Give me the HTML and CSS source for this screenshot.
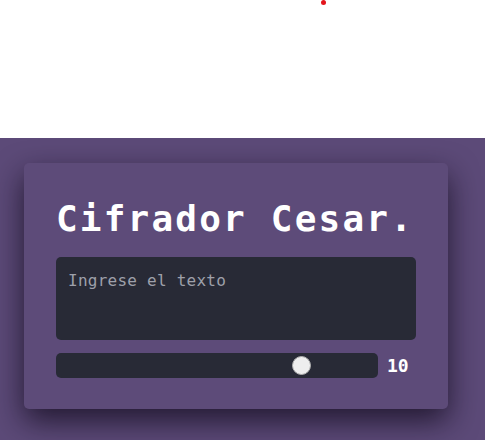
FILE: index.html
```html
<!DOCTYPE html>
<html lang="es">
<head>
<meta charset="utf-8">
<title>Cifrador Cesar</title>
<link rel="stylesheet" href="styles.css">
</head>
<body>
<span class="dot"></span>
<div class="top"></div>
<main class="stage">
  <section class="card">
    <h1 class="title">Cifrador Cesar.</h1>
    <textarea class="input" placeholder="Ingrese el texto"></textarea>
    <div class="row">
      <input class="range" type="range" min="0" max="100" value="78">
      <span class="value">10</span>
    </div>
  </section>
</main>
</body>
</html>
```
FILE: styles.css
```css
html, body {
  margin: 0;
  padding: 0;
  background: #ffffff;
  font-family: "DejaVu Sans Mono", "Liberation Mono", monospace;
}
body {
  position: relative;
  height: 440px;
  overflow: hidden;
}
.dot {
  position: absolute;
  left: 321px;
  top: 0;
  width: 5px;
  height: 5px;
  border-radius: 50%;
  background: #e3141b;
}
.top {
  height: 138px;
}
.stage {
  background: #5c4a78;
  padding: 25px 37px 40px 24px;
  height: 302px;
  box-sizing: border-box;
}
.card {
  background: #5d4b79;
  border-radius: 5px;
  box-shadow: 0 12px 30px rgba(15, 8, 25, 0.75);
  padding: 36px 32px 31px 32px;
  display: flex;
  flex-direction: column;
}
.title {
  margin: 0 0 18px 0;
  font-size: 36px;
  line-height: 40px;
  font-weight: bold;
  color: #ffffff;
  letter-spacing: 2.2px;
  white-space: nowrap;
}
.input {
  display: block;
  height: 83px;
  box-sizing: border-box;
  margin: 0 0 13px 0;
  padding: 14px 12px 12px 12px;
  border: none;
  border-radius: 5px;
  background: #282a36;
  color: #e0e0e6;
  font-family: inherit;
  font-size: 16px;
  letter-spacing: 0.25px;
  resize: none;
  outline: none;
}
.input::placeholder {
  color: #9ea0aa;
}
.row {
  display: flex;
  align-items: center;
  height: 25px;
}
.range {
  -webkit-appearance: none;
  appearance: none;
  margin: 0;
  width: 322px;
  height: 25px;
  border-radius: 5px;
  background: #282a36;
  outline: none;
}
.range::-webkit-slider-thumb {
  -webkit-appearance: none;
  appearance: none;
  width: 19px;
  height: 19px;
  border-radius: 50%;
  background: #eeeeee;
  border: 1px solid #b0b0b0;
  box-sizing: border-box;
}
.value {
  padding-left: 9px;
  color: #ffffff;
  font-size: 18px;
  font-weight: bold;
}
```
